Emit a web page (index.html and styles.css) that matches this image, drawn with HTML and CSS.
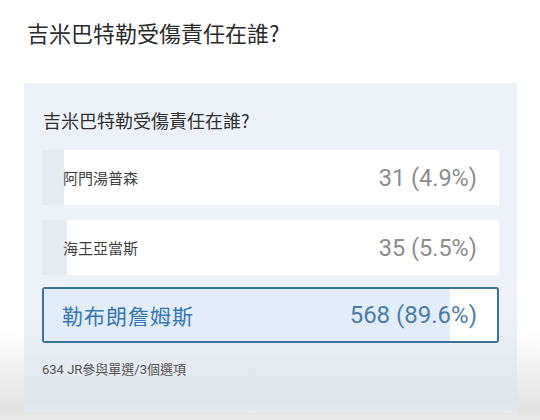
FILE: index.html
```html
<!DOCTYPE html>
<html lang="zh-Hant">
<head>
  <meta charset="UTF-8">
  <title>投票 - 吉米巴特勒受傷責任在誰?</title>
  <link rel="stylesheet" href="styles.css">
</head>
<body>

  <h1 class="page-title">吉米巴特勒受傷責任在誰?</h1>

  <div class="poll-card">
    <h2 class="poll-question">吉米巴特勒受傷責任在誰?</h2>

    <div class="poll-options">
      <div class="option">
        <div class="option-fill" style="width: 4.9%"></div>
        <div class="option-body">
          <span class="option-label">阿門湯普森</span>
          <span class="option-count">31 (4.9%)</span>
        </div>
      </div>

      <div class="option">
        <div class="option-fill" style="width: 5.5%"></div>
        <div class="option-body">
          <span class="option-label">海王亞當斯</span>
          <span class="option-count">35 (5.5%)</span>
        </div>
      </div>

      <div class="option option-top">
        <div class="option-fill" style="width: 89.6%"></div>
        <div class="option-body">
          <span class="option-label">勒布朗詹姆斯</span>
          <span class="option-count">568 (89.6%)</span>
        </div>
      </div>
    </div>

    <p class="poll-meta">634 JR參與單選/3個選項</p>
  </div>

</body>
</html>
```

FILE: styles.css
```css
* {
  margin: 0; padding: 0; box-sizing: border-box;
}

body {
  font-family: Roboto, "Noto Sans CJK TC", sans-serif;
  background: linear-gradient(to bottom, #ffffff 0, #ffffff 330px, #e2e2e2 410px, #ebebeb 420px);
  color: #2b2b2b;
  width: 540px;
  height: 420px;
  overflow: hidden;
}

.page-title {
  font-family: "Noto Sans CJK TC", sans-serif;
  font-weight: 400;
  font-size: 22px;
  line-height: 32px;
  padding: 16px 0 0 27px;
  color: #2b2b2b;
}

.poll-card {
  margin: 35px 0 0 24px;
  width: 493px;
  height: 330px;
  padding: 24px 18px 0 18px;
  background: linear-gradient(to bottom, #edf2f9 0, #edf2f9 230px, #e0e5ec 320px, #e6e9ee 330px);
}

.poll-question {
  font-family: "Noto Sans CJK TC", sans-serif;
  font-weight: 400;
  font-size: 18px;
  line-height: 26px;
  color: #2f2f2f;
  padding-left: 1px;
}

.poll-options {
  display: flex;
  flex-direction: column;
  margin-top: 17px;
}

.option {
  display: grid;
  height: 55px;
  background: #fff;
  margin-bottom: 15px;
}

.option-fill,
.option-body {
  grid-area: 1 / 1;
}

.option-fill {
  height: 100%;
  background: #e6ebf1;
}

.option-body {
  display: flex;
  align-items: center;
  justify-content: space-between;
  padding: 0 22px 0 21px;
}

.option-label {
  font-family: "Noto Sans CJK TC", sans-serif;
  font-size: 15px;
  color: #3f3f3f;
}

.option-count {
  font-size: 23.5px;
  color: #8c8c8c;
}

.option-top {
  margin-top: -3px;
  border: 2px solid #3f7396;
  border-radius: 3px;
  height: 56px;
  margin-bottom: 0;
}

.option-top .option-fill {
  background: #e2edf9;
}

.option-top .option-body {
  padding: 0 20px 0 18px;
}

.option-top .option-label {
  font-size: 21px;
  letter-spacing: 1px;
  color: #3576b4;
}

.option-top .option-count {
  font-size: 24px;
  color: #4a7dab;
}

.poll-meta {
  margin-top: 18px;
  font-size: 13px;
  line-height: 18px;
  color: #555;
}
```
